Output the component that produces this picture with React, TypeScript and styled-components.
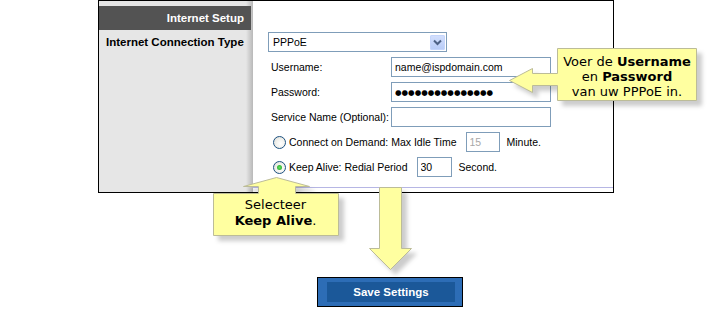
import React from 'react'
import styled, { createGlobalStyle } from 'styled-components'

const GlobalStyle = createGlobalStyle`
  html, body {
    margin: 0;
    padding: 0;
    background: #fff;
  }
  body {
    font-family: "Liberation Sans", Arial, sans-serif;
  }
`

const PAGE = styled.div`
  position: relative;
  width: 709px;
  height: 316px;
  overflow: hidden;
  background: #fff;
`

const FRAME = styled.div`
  margin-left: 98px;
  width: 514px;
  display: grid;
  grid-template-columns: 154px 1fr;
  border: 1px solid #000;
`

const SIDEBAR = styled.div`
  padding-top: 5px;
  background: linear-gradient(to right, #e6e6e6 0, #e6e6e6 calc(100% - 7px), #d2d2d2 calc(100% - 4px), #b9b9b9 100%);
`

const SECTION_HEAD = styled.div`
  height: 24px;
  margin-right: 2px;
  padding-right: 7px;
  background: #535353;
  color: #fff;
  font-weight: 700;
  font-size: 11.5px;
  line-height: 24px;
  text-align: right;
`

const SIDE_LABEL = styled.div`
  padding: 5px 0 0 7px;
  font-weight: 700;
  font-size: 11.5px;
  line-height: 14px;
  color: #000;
`

const CONTENT = styled.div`
  padding: 31px 0 4px;
  background: #fff;
`

const FORM = styled.div`
  display: grid;
  grid-template-columns: 120px 160px;
  grid-auto-rows: 20px;
  row-gap: 5px;
  align-items: center;
  padding: 0 0 10px 18px;
  border-bottom: 1px solid #b6b6e4;
  font-size: 10.5px;
  color: #000;
`

const SELECT = styled.div`
  grid-column: 1 / -1;
  box-sizing: border-box;
  width: 179px;
  height: 20px;
  margin-left: -3px;
  display: flex;
  align-items: center;
  justify-content: space-between;
  padding: 0 1px 0 4px;
  border: 1px solid #7f9db9;
  background: #fff;
`

const DROP_BTN = styled.span`
  width: 15px;
  height: 15px;
  display: flex;
  align-items: center;
  justify-content: center;
  border-radius: 2px;
  background: linear-gradient(#d4e0fd, #b7cbf7);
  box-shadow: inset 0 0 0 1px #c5d5fb;
`

const LABEL = styled.span`
  white-space: nowrap;
`

const TEXT_INPUT = styled.input<{ $w?: number; $muted?: boolean }>`
  box-sizing: border-box;
  width: ${({ $w }) => $w || 160}px;
  height: 20px;
  margin: 0;
  padding: 0 3px;
  border: 1px solid #7f9db9;
  background: #fff;
  font-family: "Liberation Sans", Arial, sans-serif;
  font-size: 10.5px;
  color: ${({ $muted }) => ($muted ? '#a8a8a8' : '#000')};
  outline: none;
`

const DOTS_INPUT = styled(TEXT_INPUT)`
  font-family: "DejaVu Sans", sans-serif;
  font-size: 7.5px;
  letter-spacing: 0;
`

const RADIO_ROW = styled.div`
  grid-column: 1 / -1;
  display: flex;
  align-items: center;
  margin-left: 2px;
  white-space: nowrap;

  input {
    margin: 0 7px 0 9px;
  }
`

const RADIO = styled.span<{ $checked?: boolean }>`
  box-sizing: border-box;
  width: 13px;
  height: 13px;
  margin-right: 3px;
  border-radius: 50%;
  border: 1px solid #1c5180;
  background: radial-gradient(circle at 60% 60%, #fff 0, #f2f2ee 45%, #d9d9d2 100%);
  display: flex;
  align-items: center;
  justify-content: center;

  &::after {
    content: '';
    width: 5px;
    height: 5px;
    border-radius: 50%;
    background: ${({ $checked }) => ($checked ? 'radial-gradient(circle, #5fe05f 0, #21a121 100%)' : 'transparent')};
  }
`

const SHAPE = styled.svg`
  position: absolute;
  overflow: visible;
  filter: drop-shadow(5px 5px 2px rgba(0, 0, 0, 0.2));
`

const NOTE = styled.div`
  position: absolute;
  box-sizing: border-box;
  font-family: "DejaVu Sans", Verdana, sans-serif;
  font-size: 13px;
  line-height: 16px;
  text-align: center;
  color: #000;

  b {
    font-weight: 700;
  }
`

const RIGHT_NOTE = styled(NOTE)`
  left: 557px;
  top: 48px;
  width: 140px;
  padding-top: 6px;
  line-height: 15px;
`

const BOTTOM_NOTE = styled(NOTE)`
  left: 213px;
  top: 193px;
  width: 125px;
  padding-top: 4px;
`

const BUTTON_ROW = styled.div`
  margin: 84px 0 0 317px;
`

const SAVE_BTN = styled.button`
  box-sizing: border-box;
  display: block;
  width: 146px;
  height: 30px;
  padding: 4px 7px 4px 9px;
  border: 1px solid #000;
  background: #2d6db6;
  cursor: pointer;

  span {
    display: flex;
    align-items: center;
    justify-content: center;
    height: 100%;
    background: #1b5899;
    color: #fff;
    font-family: "Liberation Sans", Arial, sans-serif;
    font-weight: 700;
    font-size: 11.5px;
  }
`

const FILL = '#ffffa0'
const EDGE = '#bcbc98'

const App = () => (
  <PAGE>
    <GlobalStyle />
    <FRAME>
      <SIDEBAR>
        <SECTION_HEAD>Internet Setup</SECTION_HEAD>
        <SIDE_LABEL>Internet Connection Type</SIDE_LABEL>
      </SIDEBAR>
      <CONTENT>
        <FORM>
          <SELECT>
            <span>PPPoE</span>
            <DROP_BTN>
              <svg width="9" height="7" viewBox="0 0 9 7">
                <path d="M1 1.5 L4.5 5 L8 1.5" fill="none" stroke="#4d6185" strokeWidth="2" />
              </svg>
            </DROP_BTN>
          </SELECT>

          <LABEL>Username:</LABEL>
          <TEXT_INPUT readOnly defaultValue="name@ispdomain.com" />

          <LABEL>Password:</LABEL>
          <DOTS_INPUT readOnly defaultValue={'\u25CF'.repeat(15)} />

          <LABEL>Service Name (Optional):</LABEL>
          <TEXT_INPUT readOnly defaultValue="" />

          <RADIO_ROW>
            <RADIO />
            Connect on Demand: Max Idle Time
            <TEXT_INPUT $w={34} $muted readOnly defaultValue="15" />
            Minute.
          </RADIO_ROW>

          <RADIO_ROW>
            <RADIO $checked />
            Keep Alive: Redial Period
            <TEXT_INPUT $w={35} readOnly defaultValue="30" />
            Second.
          </RADIO_ROW>
        </FORM>
      </CONTENT>
    </FRAME>

    <BUTTON_ROW>
      <SAVE_BTN>
        <span>Save Settings</span>
      </SAVE_BTN>
    </BUTTON_ROW>

    {/* callouts */}
    <SHAPE style={{ left: 500, top: 40 }} width="209" height="72">
      <path
        d="M57.5 8.5 H196.5 V60.5 H57.5 V45.5 H32.5 V52.5 L9.5 40.5 L32.5 28.5 V33.5 H57.5 Z"
        fill={FILL}
        stroke={EDGE}
      />
    </SHAPE>
    <RIGHT_NOTE>
      Voer de <b>Username</b>
      <br />
      en <b>Password</b>
      <br />
      van uw PPPoE in.
    </RIGHT_NOTE>

    <SHAPE style={{ left: 205, top: 170 }} width="145" height="75">
      <path
        d="M8.5 23.5 H53.5 V16.5 H38.5 L71.5 7.5 L104.5 16.5 H90.5 V23.5 H133.5 V65.5 H8.5 Z"
        fill={FILL}
        stroke={EDGE}
      />
    </SHAPE>
    <BOTTOM_NOTE>
      Selecteer
      <br />
      <b>Keep Alive</b>.
    </BOTTOM_NOTE>

    <SHAPE style={{ left: 360, top: 183 }} width="60" height="95">
      <path d="M19.5 4.5 H41.5 V65.5 H51.5 L30.5 86.5 L9.5 65.5 H19.5 Z" fill={FILL} stroke={EDGE} />
    </SHAPE>
  </PAGE>
)

export default App
